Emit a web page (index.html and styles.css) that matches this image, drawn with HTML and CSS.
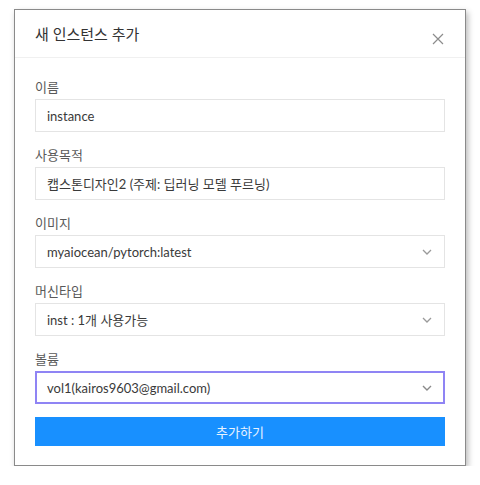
FILE: index.html
```html
<!DOCTYPE html>
<html lang="ko">
<head>
<meta charset="utf-8">
<link rel="stylesheet" href="styles.css">
</head>
<body>
<div class="modal">
  <div class="modal-header">
    <span class="title">새 인스턴스 추가</span>
    <svg class="close" width="12" height="12" viewBox="0 0 12 12"><path d="M1 1L11 11M11 1L1 11" stroke="#8c8c8c" stroke-width="1.2" fill="none"/></svg>
  </div>
  <div class="modal-body">
    <div class="field">
      <div class="label">이름</div>
      <div class="input">instance</div>
    </div>
    <div class="field">
      <div class="label">사용목적</div>
      <div class="input">캡스톤디자인2 (주제: 딥러닝 모델 푸르닝)</div>
    </div>
    <div class="field">
      <div class="label">이미지</div>
      <div class="input select"><span>myaiocean/pytorch:latest</span><svg class="chev" width="10" height="6" viewBox="0 0 10 6"><path d="M1 1L5 5L9 1" stroke="#9a9a9a" stroke-width="1.3" fill="none"/></svg></div>
    </div>
    <div class="field">
      <div class="label">머신타입</div>
      <div class="input select"><span>inst : 1개 사용가능</span><svg class="chev" width="10" height="6" viewBox="0 0 10 6"><path d="M1 1L5 5L9 1" stroke="#9a9a9a" stroke-width="1.3" fill="none"/></svg></div>
    </div>
    <div class="field">
      <div class="label">볼륨</div>
      <div class="input select focused"><span>vol1(kairos9603@gmail.com)</span><svg class="chev" width="10" height="6" viewBox="0 0 10 6"><path d="M1 1L5 5L9 1" stroke="#8a8a8a" stroke-width="1.4" fill="none"/></svg></div>
    </div>
    <button class="submit">추가하기</button>
  </div>
</div>
</body>
</html>
```
FILE: styles.css
```css
* { box-sizing: border-box; }
body {
  margin: 0;
  background: #fff;
  font-family: Lato, "Noto Sans CJK KR", sans-serif;
  color: #333;
}
.modal {
  margin: 9px 0 0 14px;
  width: 452px;
  background: #fff;
  border: 1px solid #8a8a8a;
  box-shadow: 2px 3px 6px rgba(0,0,0,0.28);
}
.modal-header {
  height: 48px;
  border-bottom: 1px solid #f0f0f0;
  display: flex;
  align-items: center;
  justify-content: space-between;
  padding: 0 20px 0 20px;
}
.title {
  font-size: 15px;
  color: #333;
}
.close { margin-top: 10px; margin-right: 1px; }
.modal-body {
  padding: 19px 20px 19px 20px;
  display: flex;
  flex-direction: column;
  gap: 13px;
}
.field { display: flex; flex-direction: column; }
.label {
  font-size: 13px;
  color: #595959;
  height: 22px;
  line-height: 20px;
}
.input {
  height: 33px;
  border: 1px solid #e4e4e4;
  padding: 0 11px;
  font-size: 13px;
  color: #3a3a3a;
  display: flex;
  align-items: center;
}
.select { justify-content: space-between; }
.chev { margin-right: 1px; }
.focused { border: 2px solid #8f84f4; padding: 0 10px; }
.submit {
  height: 29px;
  border: none;
  background: #1890ff;
  color: #e8f3ff;
  font-family: inherit;
  font-size: 13px;
  padding: 0;
}
```
